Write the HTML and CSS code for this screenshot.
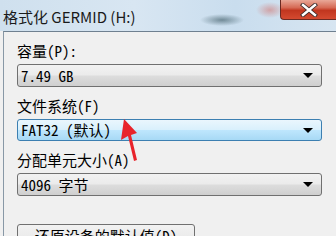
FILE: index.html
```html
<!DOCTYPE html>
<html lang="zh">
<head>
<meta charset="utf-8">
<title>格式化 GERMID (H:)</title>
<link rel="stylesheet" href="styles.css">
</head>
<body>
<div class="window">
  <div class="titlebar">
    <span class="title">格式化 GERMID (H:)</span>
    <div class="close">
      <svg width="18" height="14" viewBox="0 0 18 14">
        <path d="M3 2 L15 12 M15 2 L3 12" stroke="#3a2a2a" stroke-width="4.2" stroke-linecap="square"/>
        <path d="M3 2 L15 12 M15 2 L3 12" stroke="#ffffff" stroke-width="2.4" stroke-linecap="square"/>
      </svg>
    </div>
  </div>
  <div class="frame">
    <div class="group">
      <div class="label">容量(P):</div>
      <div class="combo"><span class="val">7.49 GB</span><span class="arrow"></span></div>
    </div>
    <div class="group">
      <div class="label">文件系统(F)</div>
      <div class="combo hot"><span class="val">FAT32 (默认)</span><span class="arrow"></span></div>
    </div>
    <div class="group">
      <div class="label">分配单元大小(A)</div>
      <div class="combo"><span class="val">4096 字节</span><span class="arrow"></span></div>
    </div>
    <div class="button">还原设备的默认值(D)</div>
    <svg class="pointer" width="336" height="236" viewBox="0 0 336 236">
      <polygon points="124,119 121,140 128,136 134,161 137,160 131,135 137,133" fill="#e8232b"/>
    </svg>
  </div>
</div>
</body>
</html>
```
FILE: styles.css
```css
html, body {
  margin: 0;
  padding: 0;
  width: 336px;
  height: 236px;
  overflow: hidden;
  background: #f0f0f0;
}
.window {
  position: relative;
  width: 336px;
  height: 236px;
  overflow: hidden;
  font-family: "Noto Sans CJK SC", "Noto Sans", sans-serif;
}
.titlebar {
  height: 31px;
  display: flex;
  justify-content: space-between;
  align-items: flex-start;
  background:
    radial-gradient(ellipse 22px 6px at 222px 20px, rgba(40,70,80,0.55), rgba(40,70,80,0) 100%),
    radial-gradient(ellipse 14px 8px at 270px 10px, rgba(210,90,80,0.45), rgba(210,90,80,0) 100%),
    linear-gradient(90deg, #cfe0ee 0%, #d8e6f2 40%, #c9ddee 70%, #d7e5f1 100%);
}
.title {
  font-size: 15px;
  line-height: 18px;
  color: #1a1a1a;
  padding: 8px 0 0 3px;
}
.close {
  width: 56px;
  height: 20px;
  box-sizing: border-box;
  border: 1px solid #6b2a22;
  border-top: none;
  border-right: none;
  border-radius: 0 0 0 4px;
  background: linear-gradient(180deg, #e9a898 0%, #d66a55 40%, #c1361f 55%, #d44a30 100%);
  display: flex;
  align-items: center;
  justify-content: center;
}
.frame {
  position: relative;
  height: 204px;
  margin-left: 3px;
  border-top: 1px solid #6f8090;
  border-left: 1px solid #8898a6;
  background: #f0f0f0;
  padding: 10px 0 0 13px;
  display: flex;
  flex-direction: column;
  font-feature-settings: "hwid" 1;
}
.group {
  display: flex;
  flex-direction: column;
  margin-bottom: 10px;
}
.label {
  font-size: 15px;
  line-height: 18px;
  color: #000;
  margin-bottom: 4px;
}
.combo {
  width: 305px;
  height: 23px;
  box-sizing: border-box;
  border: 1px solid #707070;
  border-radius: 3px;
  background: linear-gradient(180deg, #f2f2f2 0%, #ebebeb 48%, #dddddd 52%, #cfcfcf 100%);
  display: flex;
  align-items: center;
  justify-content: space-between;
  padding: 0 8px 0 3px;
}
.combo.hot {
  height: 22px;
  border-color: #3c7fb1;
  background: linear-gradient(180deg, #eaf6fd 0%, #d9f0fc 48%, #bee6fd 52%, #a7d9f5 100%);
}
.val {
  font-size: 15px;
  line-height: 18px;
  color: #000;
}
.arrow {
  width: 0;
  height: 0;
  border-left: 5px solid transparent;
  border-right: 5px solid transparent;
  border-top: 5px solid #000;
}
.button {
  flex: none;
  margin-top: 18px;
  width: 178px;
  height: 26px;
  box-sizing: border-box;
  border: 1px solid #707070;
  border-radius: 3px;
  background: linear-gradient(180deg, #f2f2f2 0%, #ebebeb 48%, #dddddd 52%, #cfcfcf 100%);
  font-size: 15px;
  line-height: 22px;
  text-align: center;
  color: #000;
}
.pointer {
  position: absolute;
  left: -4px;
  top: -32px;
  pointer-events: none;
}
```
